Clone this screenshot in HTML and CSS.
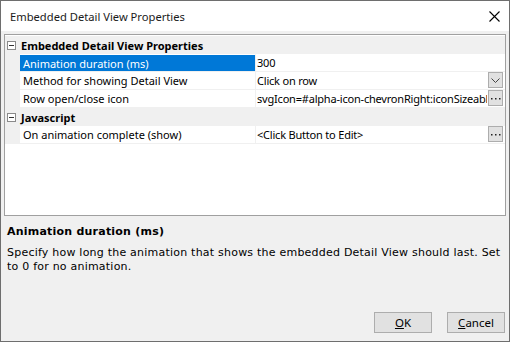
FILE: index.html
```html
<!DOCTYPE html>
<html>
<head>
    <link rel="stylesheet" href="styles.css">
</head>
<body>
    <div class="window">
        <div class="titlebar">
            <span class="title">Embedded Detail View Properties</span>
            <svg class="close" width="11" height="11" viewBox="0 0 11 11">
                <path d="M0.5 0.5 L10.5 10.5 M10.5 0.5 L0.5 10.5" stroke="#000" stroke-width="1.1" fill="none"/>
            </svg>
        </div>
        <div class="content">
            <div class="grid">
                <div class="category">
                    <span class="toggle"></span>
                    <span class="cat-name">Embedded Detail View Properties</span>
                </div>
                <div class="row">
                    <span class="gutter"></span>
                    <span class="name selected">Animation duration (ms)</span>
                    <span class="value">300</span>
                </div>
                <div class="row">
                    <span class="gutter"></span>
                    <span class="name">Method for showing Detail View</span>
                    <span class="value">Click on row
                        <span class="cell-btn">
                            <svg width="9" height="5" viewBox="0 0 9 5"><path d="M0.5 0.5 L4.5 4.5 L8.5 0.5" stroke="#444" fill="none"/></svg>
                        </span>
                    </span>
                </div>
                <div class="row">
                    <span class="gutter"></span>
                    <span class="name">Row open/close icon</span>
                    <span class="value"><span class="clip">svgIcon=#alpha-icon-chevronRight:iconSizeable</span>
                        <span class="cell-btn">
                            <svg width="11" height="4" viewBox="0 0 11 4"><rect x="1" y="2" width="1.5" height="1.5" fill="#222"/><rect x="5" y="2" width="1.5" height="1.5" fill="#222"/><rect x="9" y="2" width="1.5" height="1.5" fill="#222"/></svg>
                        </span>
                    </span>
                </div>
                <div class="category">
                    <span class="toggle"></span>
                    <span class="cat-name">Javascript</span>
                </div>
                <div class="row">
                    <span class="gutter"></span>
                    <span class="name">On animation complete (show)</span>
                    <span class="value">&lt;Click Button to Edit&gt;
                        <span class="cell-btn">
                            <svg width="11" height="4" viewBox="0 0 11 4"><rect x="1" y="2" width="1.5" height="1.5" fill="#222"/><rect x="5" y="2" width="1.5" height="1.5" fill="#222"/><rect x="9" y="2" width="1.5" height="1.5" fill="#222"/></svg>
                        </span>
                    </span>
                </div>
            </div>
            <div class="help">
                <div class="help-title">Animation duration (ms)</div>
                <div class="help-text">Specify how long the animation that shows the embedded Detail View should last. Set to 0 for no animation.</div>
            </div>
            <div class="buttons">
                <button class="btn"><u>O</u>K</button>
                <button class="btn"><u>C</u>ancel</button>
            </div>
        </div>
    </div>
</body>
</html>
```

FILE: styles.css
```css
body {
    margin: 0;
    font-family: "Noto Sans", "Open Sans", sans-serif;
    font-size: 11px;
    color: #000;
}

.window {
    width: 510px;
    height: 342px;
    box-sizing: border-box;
    border: 1px solid #6e6e6e;
    display: flex;
    flex-direction: column;
    background: #f0f0f0;
}

.titlebar {
    height: 30px;
    background: #fff;
    display: flex;
    align-items: center;
    justify-content: space-between;
    padding: 0 9px 0 9px;
}

.title {
    font-size: 11.2px;
    color: #1a1a1a;
}

.close {
    margin-top: 1px;
}

.content {
    flex: 1;
    display: flex;
    flex-direction: column;
    padding: 3px 3px 0 3px;
}

.grid {
    height: 182px;
    box-sizing: border-box;
    border: 1px solid #a0a0a0;
    background: #fff;
    padding-top: 1px;
}

.category {
    height: 18px;
    display: flex;
    align-items: center;
    background: #f0f0f0;
}

.toggle {
    width: 7px;
    height: 7px;
    border: 1px solid #8a8a8a;
    background: #fff;
    margin: 0 5px 0 2px;
    position: relative;
}

.toggle::after {
    content: "";
    position: absolute;
    left: 1px;
    top: 3px;
    width: 5px;
    height: 1px;
    background: #333;
}

.cat-name {
    font-weight: bold;
}

.row {
    height: 18px;
    display: flex;
}

.gutter {
    width: 15px;
    background: #f0f0f0;
}

.name, .value {
    box-sizing: border-box;
    border-bottom: 1px solid #f0f0f0;
    display: flex;
    align-items: center;
    white-space: nowrap;
    overflow: hidden;
}

.name {
    width: 236px;
    border-right: 1px solid #f0f0f0;
    padding-left: 3px;
}

.name.selected {
    background: #0078d7;
    color: #fff;
    border-top: 1px solid #fff;
}

.value {
    flex: 1;
    padding-left: 1px;
    position: relative;
    letter-spacing: -0.2px;
}

.clip {
    width: 230px;
    overflow: hidden;
}

.cell-btn {
    position: absolute;
    right: 2px;
    top: 0;
    width: 15px;
    height: 16px;
    box-sizing: border-box;
    background: #e1e1e1;
    border: 1px solid #adadad;
    display: flex;
    align-items: center;
    justify-content: center;
}

.help {
    padding: 6px 3px 0 3px;
    font-family: "DejaVu Sans", sans-serif;
    font-size: 11px;
    letter-spacing: 0.22px;
}

.help-title {
    font-weight: bold;
    height: 20px;
    line-height: 20px;
}

.help-text {
    margin-top: 4px;
    line-height: 14px;
}

.buttons {
    margin-top: auto;
    display: flex;
    justify-content: flex-end;
    gap: 15px;
    padding: 0 1px 8px 0;
}

.btn {
    width: 58px;
    height: 21px;
    background: #e1e1e1;
    border: 1px solid #adadad;
    font-family: "Noto Sans", sans-serif;
    font-size: 11.5px;
    padding: 0;
    color: #000;
}
```
